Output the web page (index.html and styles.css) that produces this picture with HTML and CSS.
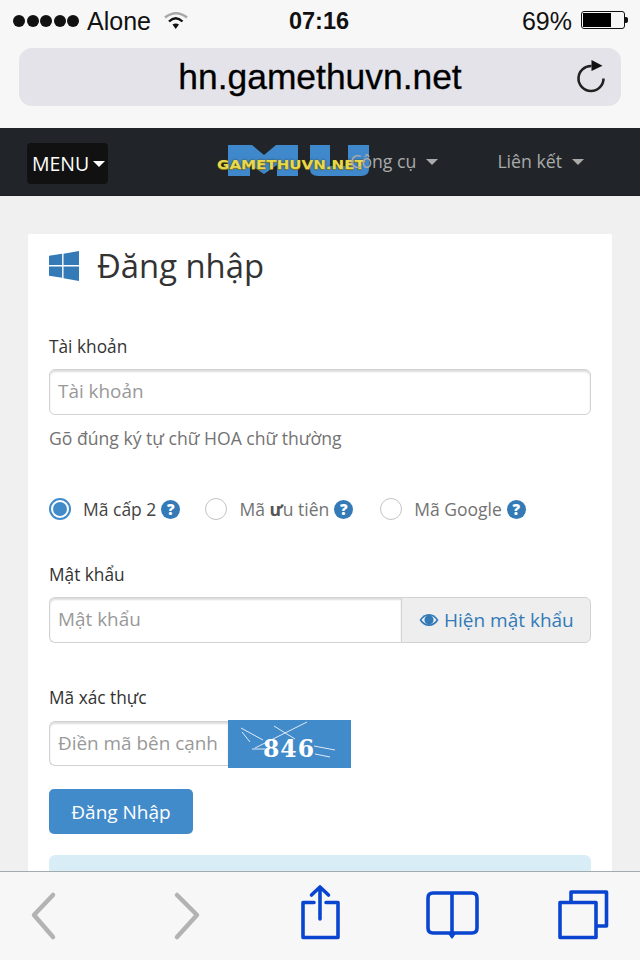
FILE: index.html
```html
<!DOCTYPE html>
<html lang="vi">
<head>
<meta charset="utf-8">
<title>Đăng nhập</title>
<link rel="stylesheet" href="styles.css">
</head>
<body>
<div class="phone">
  <header class="chrome">
    <div class="status">
      <div class="status-left">
        <span class="signal"><i></i><i></i><i></i><i></i><i></i></span>
        <span>Alone</span>
        <svg class="wifi" width="24" height="18" viewBox="0 0 24 18"><path d="M1 6.500Q12 -2 23 6.500" fill="none" stroke="#a8a8a8" stroke-width="2.400"/><path d="M5 10.500Q11.700 4 18.500 10.500" fill="none" stroke="#111" stroke-width="2.400"/><path d="M8.500 13.500Q11.700 11.500 15 13.500L11.700 18Z" fill="#111"/></svg>
      </div>
      <div class="clock">07:16</div>
      <div class="status-right">
        <span>69%</span>
        <span class="battery"><span class="battery-level"></span></span>
      </div>
    </div>
    <div class="url-bar">
      <span class="url">hn.gamethuvn.net</span>
      <svg class="reload" width="30" height="38" viewBox="0 0 30 38"><path d="M15.500 8A12.500 12.500 0 1 0 27.500 20.500" fill="none" stroke="#222" stroke-width="2.600"/><path d="M15.500 2L26.500 7.800L15.500 13Z" fill="#111"/></svg>
    </div>
  </header>

  <nav class="navbar">
    <button class="menu-btn">MENU<span class="caret caret-white"></span></button>
    <div class="nav-links">
      <a class="nav-link">Công cụ<span class="caret"></span></a>
      <a class="nav-link">Liên kết<span class="caret"></span></a>
    </div>
    <div class="logo">
      <svg class="logo-mu" width="142" height="31" viewBox="0 0 142 31"><path d="M0 0H24L36 10L48 0H70V31H49V20L36 29L22 20V31H0Z" fill="#3f88cc"/><path d="M82 0H102V21H120V0H141V24Q141 31 133 31H90Q82 31 82 24Z" fill="#3f88cc"/></svg>
      <span class="logo-text">GAMETHUVN.NET</span>
    </div>
  </nav>

  <main class="page">
    <section class="card">
      <h1 class="title">
        <svg class="win-icon" width="32" height="30" viewBox="0 0 32 32"><path d="M0 5L14 3V15H0ZM15.500 2.800L32 0V15H15.500ZM0 16.500H14V28.500L0 26.500ZM15.500 16.500H32V32L15.500 29Z" fill="#337ab7"/></svg>
        Đăng nhập
      </h1>

      <label class="label label-first">Tài khoản</label>
      <div class="input">Tài khoản</div>
      <p class="help">Gõ đúng ký tự chữ HOA chữ thường</p>

      <div class="radios">
        <span class="radio-item radio-a"><span class="radio radio-on"></span><span class="radio-text radio-text-on">Mã cấp 2</span><span class="q">?</span></span>
        <span class="radio-item radio-b"><span class="radio"></span><span class="radio-text">Mã <b class="heavy">ư</b>u tiên</span><span class="q">?</span></span>
        <span class="radio-item"><span class="radio"></span><span class="radio-text">Mã Google</span><span class="q">?</span></span>
      </div>

      <label class="label label-pass">Mật khẩu</label>
      <div class="group">
        <div class="input input-flex">Mật khẩu</div>
        <div class="addon">
          <svg width="20" height="14" viewBox="0 0 20 14"><path d="M0.500 7C3 3 6 1 10 1S17 3 19.500 7C17 11 14 13 10 13S3 11 0.500 7Z" fill="#337ab7"/><path d="M2.500 7C4.500 4.500 6.500 3 8 2.800A4.500 4.500 0 1 0 12 2.800C13.500 3 15.500 4.500 17.500 7C15.500 9.500 13 11.300 10 11.300S4.500 9.500 2.500 7Z" fill="#eee"/><circle cx="10" cy="6.500" r="3.600" fill="#337ab7"/></svg>
          <span>Hiện mật khẩu</span>
        </div>
      </div>

      <label class="label label-captcha">Mã xác thực</label>
      <div class="captcha-row">
        <div class="input input-captcha">Điền mã bên cạnh</div>
        <svg class="captcha" width="123" height="48" viewBox="0 0 123 48">
          <g stroke="#dfeaf5" stroke-width="1" fill="none"><path d="M13 8L35 20M14 12L22 22M46 6L67 19M79 2L27 28M24 29H37M86 26L107 30M87 34L102 37"/></g>
          <text x="35" y="37" class="captcha-text">846</text>
        </svg>
      </div>
      <button class="submit">Đăng Nhập</button>
      <div class="alert"></div>
    </section>
  </main>

  <footer class="toolbar">
    <svg width="640" height="88" viewBox="0 0 640 88" fill="none" stroke-linecap="round" stroke-linejoin="round">
      <path d="M53 23L34 43L53 65M177 23L197 43L177 65" stroke="#b3b3b3" stroke-width="4.500"/>
      <g stroke="#0a45d0" stroke-width="3.600">
        <path d="M314 30.500H303V65.500H338V30.500H326M320 47V16M311.500 23L320 15L328.500 23"/>
        <path d="M452 21H433Q428 21 428 26V56Q428 61 433 61H472Q477 61 477 56V26Q477 21 472 21H452V64"/>
        <path d="M560 30.500H596V65.500H560ZM571 29V20H606.500V54H597"/>
      </g>
      <path d="M447.500 61L452 67L456.500 61Z" fill="#0a45d0"/>
    </svg>
  </footer>
</div>
</body>
</html>
```
FILE: styles.css
```css
* { box-sizing: border-box; }
html, body { margin: 0; padding: 0; }
body { font-family: "Open Sans", sans-serif; background: #f0f0f0; }
.phone { width: 640px; height: 960px; display: flex; flex-direction: column; overflow: hidden; }

.chrome { height: 128px; background: #f7f7f7; font-family: "Liberation Sans", sans-serif; color: #111; flex: none; }
.status { height: 42px; padding: 0 15px 0 13px; display: flex; align-items: center; justify-content: space-between; font-size: 25px; }
.status-left, .status-right { display: flex; align-items: center; width: 190px; }
.status-right { justify-content: flex-end; gap: 9px; }
.signal { display: flex; gap: 1.500px; margin-right: 8px; }
.signal i { width: 12px; height: 12px; border-radius: 50%; background: #111; }
.wifi { margin: 0 0 2px 13px; }
.clock { font-weight: 700; font-size: 23.500px; }
.battery { width: 44px; height: 18px; border: 1px solid #111; border-radius: 3px; padding: 1px; display: block; position: relative; margin-bottom: 2px; }
.battery::after { content: ""; position: absolute; right: -4px; top: 5px; width: 3px; height: 6px; background: #111; border-radius: 0 2px 2px 0; }
.battery-level { display: block; width: 28px; height: 100%; background: #000; }
.url-bar { height: 58px; margin: 6px 19px 0; background: #e3e3e9; border-radius: 13px; display: flex; align-items: center; justify-content: center; position: relative; }
.url { font-size: 35.400px; color: #000; -webkit-text-stroke: 0.300px #000; }
.reload { position: absolute; right: 15px; top: 10px; }

.navbar { height: 68px; flex: none; background: #212529; position: relative; display: flex; align-items: flex-start; justify-content: space-between; padding: 15px 56px 0 27px; border-bottom: 1px solid #1a1d20; }
.menu-btn { width: 81px; height: 41px; padding: 0 0 0 5px; background: #111; border: 0; border-radius: 4px; color: #fff; font: 19.500px "Open Sans", sans-serif; display: flex; align-items: center; }
.caret { display: inline-block; width: 0; height: 0; margin-left: 10px; border-top: 6px solid #aaa; border-left: 6px solid transparent; border-right: 6px solid transparent; vertical-align: 3px; }
.caret-white { border-top-color: #fff; margin-left: 4px; }
.nav-links { display: flex; gap: 59px; color: #aaa; font-size: 17.700px; line-height: 36px; z-index: 2; }
.logo { position: absolute; left: 217px; top: 17px; width: 153px; height: 31px; }
.logo-mu { position: absolute; left: 11px; top: 0; }
.logo-text { position: absolute; left: 0; top: 11px; font: 700 13px/18px "DejaVu Sans", sans-serif; white-space: nowrap; transform: scaleX(1.16); transform-origin: left center; color: #e8d84c; text-shadow: 0 1px 0 #8a7a18, 0 0 2px #3a3508; }

.page { flex: 1; min-height: 0; padding: 38px 28px 0; overflow: hidden; }
.card { background: #fff; padding: 0 21px; height: 700px; border-radius: 2px; color: #333; }
.title { margin: 0 0 0 -1px; display: flex; align-items: center; gap: 17px; font-size: 32.800px; font-weight: 400; line-height: 44px; padding-top: 10px; }
.label { display: block; font-size: 17.300px; line-height: 24px; }
.label-first { margin-top: 47px; }
.label-pass { margin-top: 42px; }
.label-captcha { margin-top: 43px; }
.input { height: 46px; margin-top: 10px; padding: 0 8px; background: #fff; border: 1.500px solid #d2d2d2; border-radius: 6px; box-shadow: inset 0 2px 2px #ddd; color: #999; font-size: 18.900px; line-height: 42px; white-space: nowrap; }
.help { margin: 11px 0 0; color: #737373; font-size: 17.600px; line-height: 24px; }
.radios { display: flex; margin-top: 47px; height: 24px; align-items: center; color: #737373; font-size: 17.500px; }
.radio-item { display: flex; align-items: center; }
.radio-a { margin-right: 25px; }
.radio-b { margin-right: 27px; }
.radio { width: 22px; height: 22px; border: 1px solid #c4c4c4; border-radius: 50%; margin-right: 12px; background: #fff; }
.radio-on { border: 2px solid #428bca; padding: 2px; background: #428bca content-box; }
.radio-text-on { color: #444; }
.heavy { font-weight: 700; color: #555; }
.q { width: 19px; height: 19px; margin-left: 5px; border-radius: 50%; background: #337ab7; color: #fff; font-size: 15px; font-weight: 800; line-height: 19px; text-align: center; }
.group { display: flex; margin-top: 10px; }
.input-flex { flex: 1; margin: 0; border-right: 0; border-radius: 6px 0 0 6px; }
.addon { width: 190px; height: 46px; display: flex; align-items: center; gap: 5px; padding-left: 17px; background: #eee; border: 1.500px solid #d2d2d2; border-radius: 0 6px 6px 0; color: #337ab7; font-size: 19px; }
.captcha-row { display: flex; align-items: flex-start; margin-top: 10px; }
.input-captcha { width: 179px; margin: 1px 0 0; height: 45px; border-right: 0; border-radius: 6px 0 0 6px; }
.captcha { background: #428bca; flex: none; }
.captcha-text { font: 700 23.500px "DejaVu Serif", serif; fill: #fff; letter-spacing: 1px; }
.submit { display: block; width: 144px; height: 45px; margin-top: 21px; background: #428bca; border: 0; border-radius: 5px; color: #fff; font: 19px "Open Sans", sans-serif; }
.alert { height: 60px; margin-top: 21px; background: #d9edf7; border-radius: 6px; }

.toolbar { height: 89px; flex: none; background: #f7f7f7; border-top: 1px solid #a3abb0; position: relative; z-index: 3; }
.toolbar svg { display: block; }
```
